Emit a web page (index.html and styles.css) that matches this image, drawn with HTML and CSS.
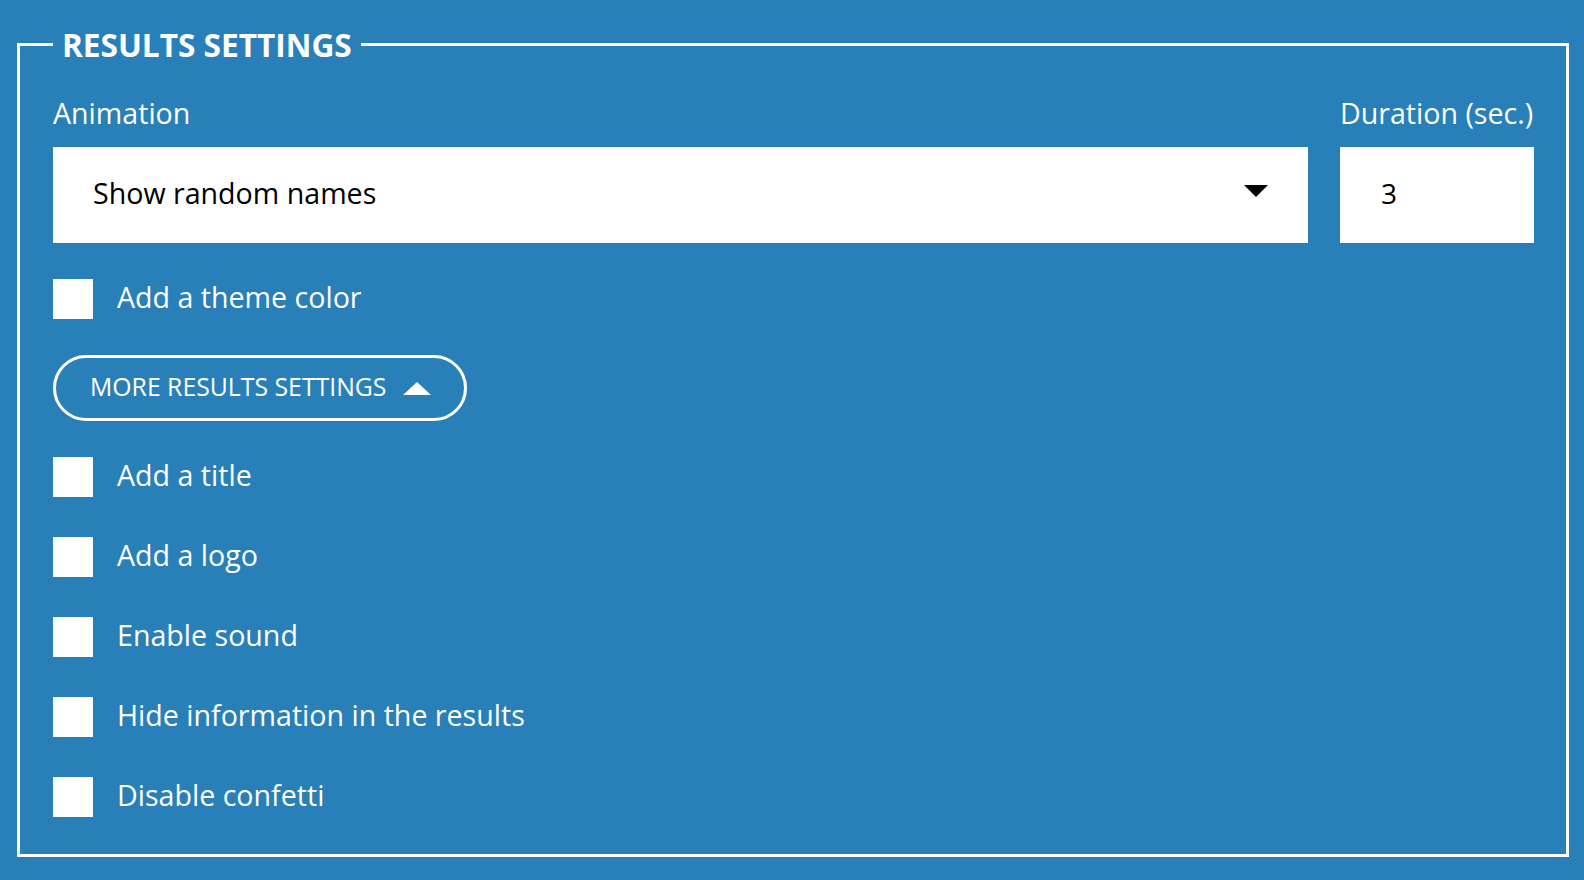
FILE: index.html
```html
<!DOCTYPE html>
<html lang="en">
<head>
<meta charset="utf-8">
<title>Results settings</title>
<link rel="stylesheet" href="styles.css">
</head>
<body>
<div class="page">
  <fieldset class="panel">
    <legend class="panel-title">RESULTS SETTINGS</legend>
    <div class="field-grid">
      <label class="field-label">Animation</label>
      <label class="field-label">Duration (sec.)</label>
      <div class="select">
        <span class="select-value">Show random names</span>
        <svg class="select-arrow" width="24" height="12" viewBox="0 0 24 12"><path d="M0 0H24L12 12Z" fill="#000"/></svg>
      </div>
      <div class="number-input">3</div>
    </div>
    <div class="check-row first">
      <span class="check-box"></span>
      <span class="check-label">Add a theme color</span>
    </div>
    <button class="toggle-btn">
      <span class="toggle-text">MORE RESULTS SETTINGS</span>
      <svg class="toggle-arrow" width="28" height="13" viewBox="0 0 28 13"><path d="M0 13H28L14 0Z" fill="#fff"/></svg>
    </button>
    <div class="check-list">
      <div class="check-row"><span class="check-box"></span><span class="check-label">Add a title</span></div>
      <div class="check-row"><span class="check-box"></span><span class="check-label">Add a logo</span></div>
      <div class="check-row"><span class="check-box"></span><span class="check-label">Enable sound</span></div>
      <div class="check-row"><span class="check-box"></span><span class="check-label">Hide information in the results</span></div>
      <div class="check-row"><span class="check-box"></span><span class="check-label">Disable confetti</span></div>
    </div>
  </fieldset>
</div>
</body>
</html>
```
FILE: styles.css
```css
html, body {
  margin: 0;
  padding: 0;
  background: #2980b9;
  height: 100%;
}
body {
  font-family: "Open Sans", "Noto Sans", sans-serif;
  color: #fff;
}
.page {
  padding: 22px 15px 0 17px;
}
.panel {
  margin: 0;
  border: 3px solid #fff;
  padding: 27px 32px 37px 33px;
  min-width: 0;
}
.panel-title {
  font-size: 31.6px;
  font-weight: 700;
  padding: 0 9px;
  line-height: 45px;
}
.field-grid {
  display: grid;
  grid-template-columns: 1fr 194px;
  column-gap: 32px;
}
.field-label {
  font-size: 28.6px;
  line-height: 38px;
  margin-bottom: 15px;
}
.select {
  background: #fff;
  color: #000;
  height: 96px;
  display: flex;
  align-items: center;
  justify-content: space-between;
  padding: 0 40px;
  box-sizing: border-box;
}
.select-value {
  font-size: 28.6px;
  line-height: 38px;
  margin-top: -4px;
}
.select-arrow {
  margin-top: -8px;
}
.number-input {
  background: #fff;
  color: #000;
  height: 96px;
  display: flex;
  align-items: center;
  padding-left: 41px;
  font-size: 28px;
  line-height: 38px;
  box-sizing: border-box;
  padding-bottom: 4px;
}
.check-row {
  display: flex;
  align-items: center;
  gap: 24px;
  height: 40px;
}
.check-row.first {
  margin-top: 36px;
}
.check-box {
  width: 40px;
  height: 40px;
  background: #fff;
  flex: none;
}
.check-label {
  font-size: 28.6px;
  line-height: 38px;
  margin-top: -4px;
}
.toggle-btn {
  margin-top: 36px;
  display: flex;
  align-items: center;
  gap: 17px;
  height: 66px;
  box-sizing: border-box;
  border: 3px solid #fff;
  border-radius: 33px;
  background: transparent;
  color: #fff;
  font-family: inherit;
  font-size: 24.8px;
  padding: 0 33px 0 34px;
  cursor: pointer;
}
.toggle-text {
  margin-top: -4px;
}
.check-list {
  margin-top: 36px;
  display: flex;
  flex-direction: column;
  gap: 40px;
}
```
